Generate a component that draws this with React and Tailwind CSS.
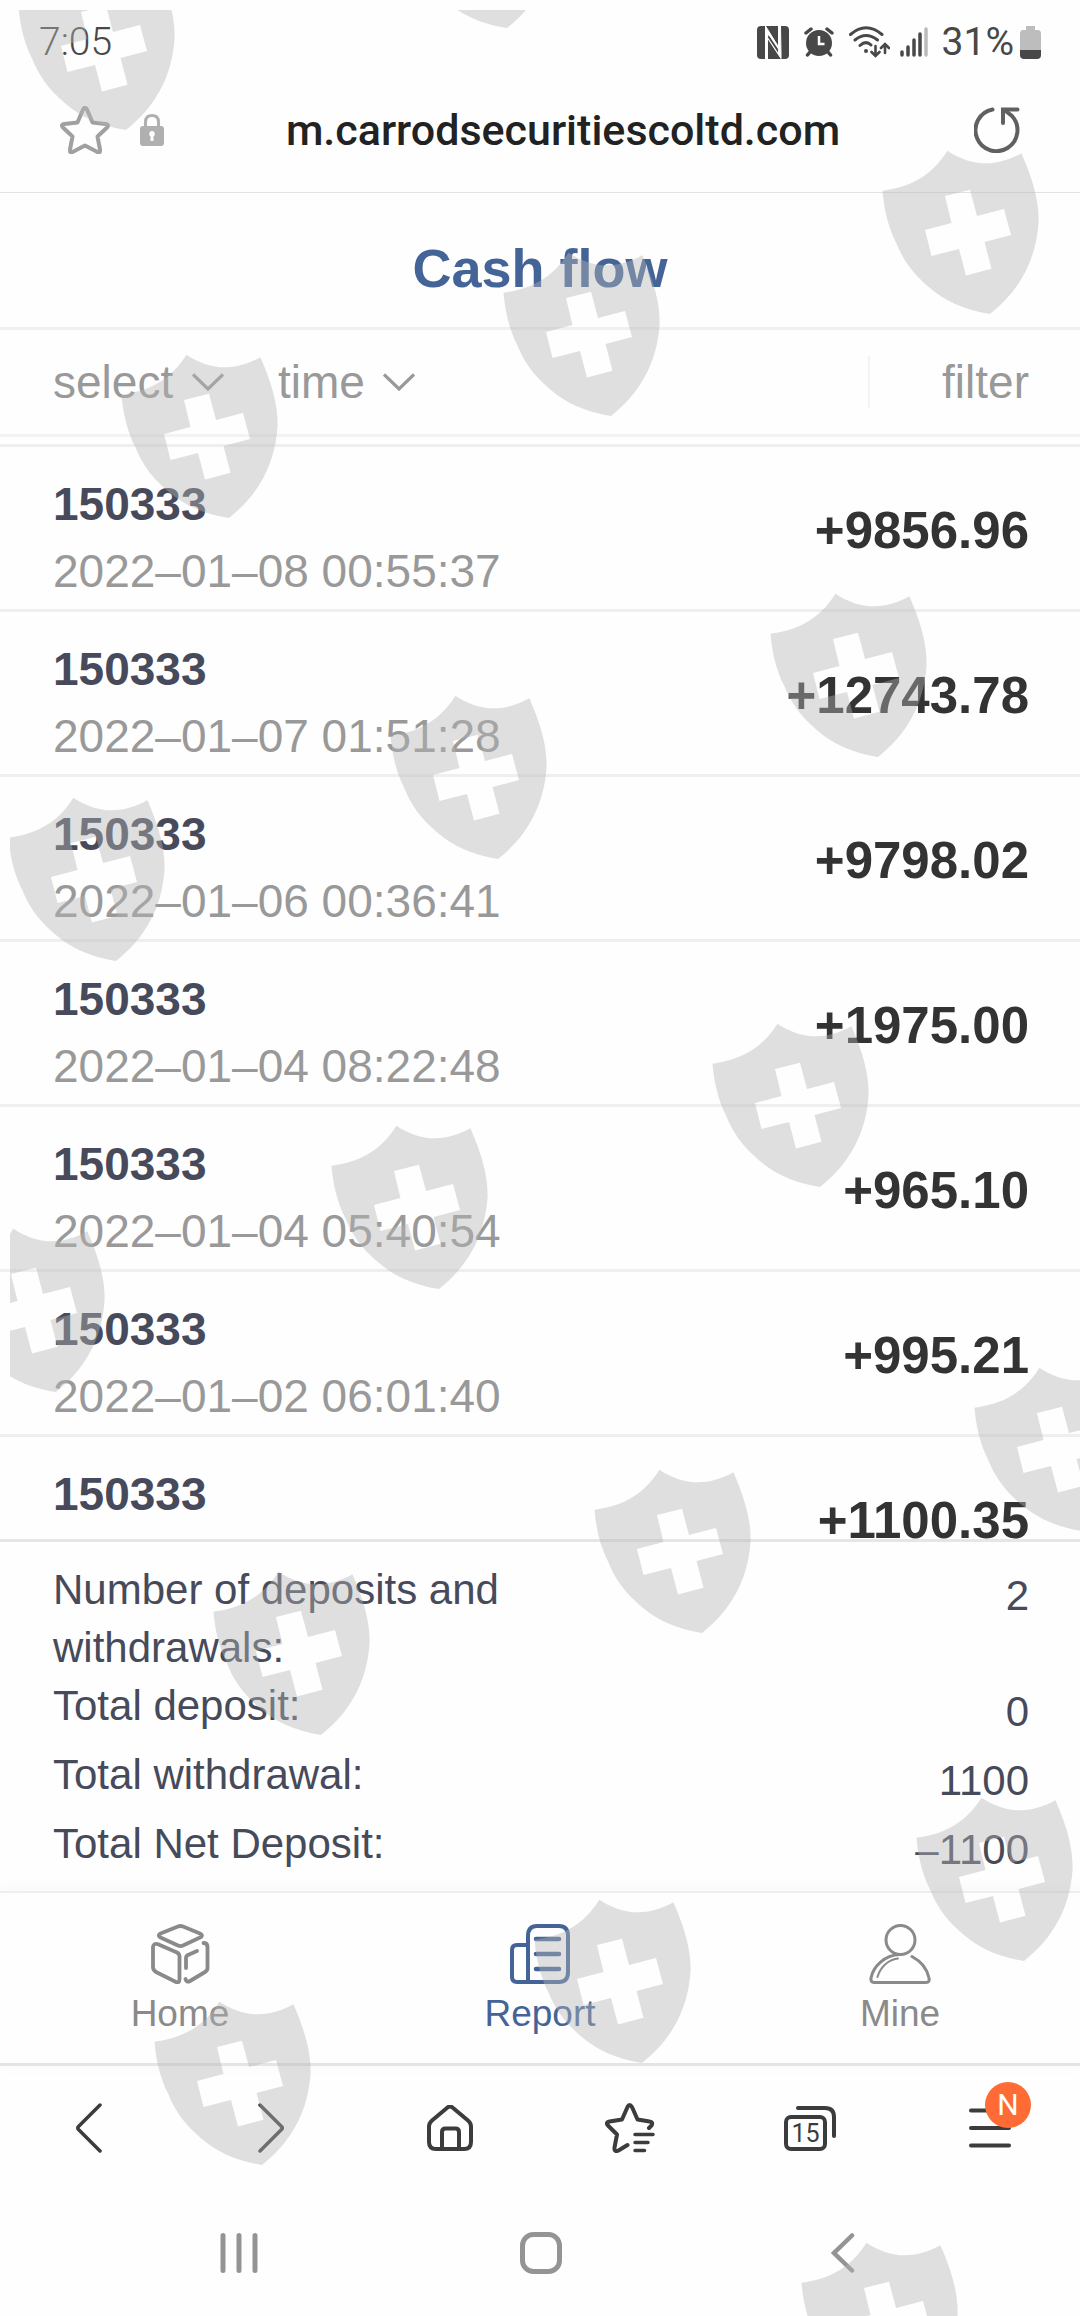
import React, { useState } from 'react';

const FLOWS = [
  { account: '150333', date: '2022–01–08 00:55:37', amount: '+9856.96' },
  { account: '150333', date: '2022–01–07 01:51:28', amount: '+12743.78' },
  { account: '150333', date: '2022–01–06 00:36:41', amount: '+9798.02' },
  { account: '150333', date: '2022–01–04 08:22:48', amount: '+1975.00' },
  { account: '150333', date: '2022–01–04 05:40:54', amount: '+965.10' },
  { account: '150333', date: '2022–01–02 06:01:40', amount: '+995.21' },
  { account: '150333', date: '', amount: '+1100.35' },
];

const SUMMARY = [
  { label: 'Number of deposits and withdrawals:', value: '2' },
  { label: 'Total deposit:', value: '0' },
  { label: 'Total withdrawal:', value: '1100' },
  { label: 'Total Net Deposit:', value: '–1100' },
];

const TABS = [
  { name: 'Home', Icon: CubeIcon },
  { name: 'Report', Icon: ReportIcon },
  { name: 'Mine', Icon: PersonIcon },
];

// top left corner of every shield on the watermark layer
const SHIELDS = [
  [8, -44],
  [389, -146],
  [872, 140],
  [493, 242],
  [111, 344],
  [760, 583],
  [380, 685],
  [-2, 787],
  [702, 1013],
  [321, 1115],
  [-62, 1218],
  [964, 1357],
  [584, 1459],
  [203, 1561],
  [906, 1787],
  [524, 1889],
  [144, 1991],
  [791, 2232],
];

function Watermark() {
  return (
    <svg
      className="absolute top-2.5 left-2.5 right-0 bottom-0 w-full h-full overflow-hidden pointer-events-none"
      aria-hidden="true"
    >
      <g fill="#b4b4b4" fillOpacity="0.42" fillRule="evenodd">
        {SHIELDS.map(([x, y]) => (
          <path
            key={`${x}-${y}`}
            transform={`translate(${x} ${y})`}
            d="M0.5 40.7C27 37 49 27 65.4 0.7C89 16 112 18 139.4 3.3C152 32 157 53 156.6 72C154 112 136 142 108 164C82 160 63 151 47 137.3C30 123 20 108 14.4 93.3C6 77 2 59 0.5 40.7ZM63 46L69.5 73L43 80L49.5 106L77 99L84 125.5L109.5 118.7L102.5 92L129 85L122 59L95 66L88 39.7Z"
          />
        ))}
      </g>
    </svg>
  );
}

function CubeIcon() {
  return (
    <svg width="60" height="60" viewBox="0 0 60 60" fill="none" stroke="currentColor" strokeWidth="3.800" strokeLinecap="round" strokeLinejoin="round">
      <path d="M28 2.500Q30.500 1.500 33 2.500L50 9.500Q54 11.500 50 13.500L33 21.500Q30.500 22.700 28 21.500L10.500 13.500Q7 11.500 10.500 9.500Z" />
      <path d="M7.500 20L27 28.500Q29.500 30 29.500 32.500V55Q29.500 59.500 26 58L6 48Q3 46 3 43V23Q3.500 19 7.500 20Z" />
      <path d="M53.500 19Q57.500 19 57.500 23V44Q57.500 46.500 55 48L40 57Q36.500 59 35.500 55" />
      <path d="M36 44V34Q36 32 38 31L47 27" />
    </svg>
  );
}

function ReportIcon() {
  return (
    <svg width="60" height="60" viewBox="0 0 60 60" fill="none" stroke="currentColor" strokeWidth="4" strokeLinecap="round" strokeLinejoin="round">
      <path d="M18 58V12Q18 2 27 2H49Q58 2 58 12V48Q58 58 49 58H7Q2 58 2 53V26Q2 21 7 21H18" />
      <path d="M26 15H49M26 30H49M26 45H49" strokeWidth="4.500" />
    </svg>
  );
}

function PersonIcon() {
  return (
    <svg width="62" height="60" viewBox="0 0 62 60" fill="none" stroke="currentColor" strokeLinecap="round" strokeLinejoin="round">
      <circle cx="31.500" cy="16" r="14.500" strokeWidth="3" />
      <path d="M31 30.500C15 31 4 43 2 54Q1.500 58.500 5 58.500H57Q61 58.500 60 54Q57 40 43 32.500" strokeWidth="3" />
      <path d="M8.500 53C11 44 18 36 29 34.500" strokeWidth="2" />
    </svg>
  );
}

function StatusIcons() {
  return (
    <>
      <svg className="mr-[15px]" width="32" height="33" viewBox="0 0 32 33">
        <rect width="32" height="33" rx="4" fill="#484848" />
        <path d="M8.500 0V33L10.500 33V12L24 32.500V28L23.500 0H21.500V21L8.500 0Z" fill="#fefefe" stroke="#fefefe" strokeWidth="1" />
        <path d="M11 11.500L21 26.500V23L11.500 9Z" fill="#484848" />
      </svg>
      <svg className="mr-[15px]" width="30" height="30" viewBox="0 0 30 30" fill="none" stroke="#484848" strokeLinecap="round">
        <circle cx="15" cy="16" r="13" fill="#484848" stroke="none" />
        <path d="M2 6L7 2M28 6L23 2M6 25L3.500 28M24 25L26.500 28" strokeWidth="3.500" />
        <path d="M15 9V17H20.500" stroke="#fefefe" strokeWidth="2.500" strokeLinecap="butt" />
      </svg>
      <svg className="mr-2.5" width="41" height="32" viewBox="0 0 41 32" fill="none" stroke="#484848" strokeWidth="3" strokeLinecap="round">
        <path d="M1.500 8.500Q17 -5 33 8.500M6 14Q17 5 28.500 14M11 19.500Q17 14 22 19" />
        <circle cx="17" cy="25" r="2" fill="#484848" stroke="none" />
        <path d="M26.500 20V29.500M22.500 26L26.500 30L30.500 26M36 27V18.500M32 22L36 18L40 22" strokeWidth="2.600" />
      </svg>
      <svg className="mr-3.5" width="28" height="30" viewBox="0 0 28 30" strokeWidth="3.500" strokeLinecap="round" stroke="#484848">
        <path d="M2 25V28M8 20V28M14 13V28M20 7V28" />
        <path d="M26 2V28" stroke="#bbb" />
      </svg>
    </>
  );
}

function Chevron() {
  return (
    <svg width="32" height="18" viewBox="0 0 32 18" fill="none" stroke="#999" strokeWidth="3.200">
      <path d="M1 1.500L16 16L31 1.500" />
    </svg>
  );
}

export default function App() {
  const [tab, setTab] = useState('Report');

  return (
    <div className="relative flex flex-col h-screen overflow-hidden bg-[#fefefe] font-['Liberation_Sans',Arial,sans-serif]">
      <div className="flex items-center pt-3 pl-[39px] pr-[39px] leading-[60px] text-[39px] text-[#484848] font-['Roboto',sans-serif]">
        <span className="mr-auto font-light">7:05</span>
        <StatusIcons />
        <span className="mr-1.5">31%</span>
        <svg width="21" height="33" viewBox="0 0 21 33">
          <path d="M6 0H15V4H18Q21 4 21 8V24H0V8Q0 4 3 4H6Z" fill="#bdbdbd" />
          <path d="M0 24H21V29Q21 33 17 33H4Q0 33 0 29Z" fill="#484848" />
        </svg>
      </div>

      <div className="flex items-center h-[121px] pb-1 px-[60px] border-b border-[#e2e2e2]">
        <button aria-label="Bookmark">
          <svg width="50" height="48" viewBox="0 0 50 48" fill="none" stroke="#a0a0a0" strokeWidth="4" strokeLinejoin="round">
            <path d="M23 3.500Q25 0 27 3.500L32.500 16.500L45.500 18Q50 18.500 46.500 22L37.500 30.500L40 43.500Q40.500 48 36.500 45.500L25 39.500L13.500 45.500Q9.500 48 10 43.500L12.500 30.500L3.500 22Q0 18.500 4.500 18L17.500 16.500Z" />
          </svg>
        </button>
        <svg className="ml-[30px]" width="24" height="32" viewBox="0 0 24 32">
          <path d="M5.500 14V8Q5.500 1.500 12 1.500T18.500 8V14" fill="none" stroke="#b0b0b0" strokeWidth="3" />
          <rect y="12" width="24" height="20" rx="3" fill="#b0b0b0" />
          <path d="M12 17A3 3 0 0 1 13.500 22.500V27H10.500V22.500A3 3 0 0 1 12 17Z" fill="#fefefe" />
        </svg>
        <input
          aria-label="Address"
          defaultValue="m.carrodsecuritiescoltd.com"
          className="flex-1 min-w-0 mr-3 bg-transparent text-center text-[43px] font-medium text-[#222] font-['Roboto',sans-serif] focus:outline-none"
        />
        <button aria-label="Reload">
          <svg width="46" height="46" viewBox="0 0 46 46" fill="none" stroke="#606060" strokeWidth="4" strokeLinecap="round">
            <path d="M18.500 2.500A21 21 0 1 0 38 9L31 3.500" />
            <path d="M43.500 2.500H29V16" />
          </svg>
        </button>
      </div>

      <h1 className="pt-11 pb-7 border-b-3 border-[#f0f0f0] text-center text-[54px] leading-[62px] font-bold text-[#446498]">
        Cash flow
      </h1>

      <div className="flex items-center h-[107px] pl-[53px] pr-[51px] border-b-3 border-[#f3f3f3] text-[46px] text-[#999]">
        <label className="flex items-center gap-[18px] mr-[54px]">
          <select aria-label="select" className="appearance-none bg-transparent">
            <option>select</option>
          </select>
          <Chevron />
        </label>
        <label className="flex items-center gap-[18px]">
          <select aria-label="time" className="appearance-none bg-transparent">
            <option>time</option>
          </select>
          <Chevron />
        </label>
        <button className="ml-auto pl-[72px] border-l-2 border-[#f3f3f3] leading-[52px]">filter</button>
      </div>

      <ul className="flex-1 min-h-0 mt-[7px] border-t-3 border-[#efefef] overflow-hidden">
        {FLOWS.map((flow, index) => (
          <li
            key={index}
            className="flex items-center justify-between pl-[53px] pr-[51px] pt-[27px] pb-2 border-b-3 border-[#efefef] text-[46px]"
          >
            <div>
              <p className="mb-[7px] leading-[60px] font-bold text-[#464a5a]">{flow.account}</p>
              <p className="h-[60px] leading-[60px] text-[#999]">{flow.date}</p>
            </div>
            <span className="mb-3 text-[51px] font-bold text-[#333]">{flow.amount}</span>
          </li>
        ))}
      </ul>

      <dl className="pl-[53px] pr-[51px] pt-[19px] pb-[7px] border-t-3 border-[#e6e6e6] text-[42px] text-[#464a5a]">
        {SUMMARY.map((row) => (
          <div key={row.label} className="flex items-start justify-between">
            <dt className="w-1/2 leading-[58px]">{row.label}</dt>
            <dd className="leading-[69px]">{row.value}</dd>
          </div>
        ))}
      </dl>

      <nav className="grid grid-cols-3 pt-[31px] pb-[27px] border-t-2 border-[#eee] shadow-[0_0_18px_rgba(0,0,0,0.04)]">
        {TABS.map(({ name, Icon }) => (
          <button
            key={name}
            onClick={() => setTab(name)}
            className={`flex flex-col items-center gap-2 text-[37px] leading-[44px] ${
              tab === name ? 'text-[#446498]' : 'text-[#8a8a8a]'
            }`}
          >
            <Icon />
            {name}
          </button>
        ))}
      </nav>

      <div className="grid grid-cols-6 h-[126px] border-t-3 border-[#e4e4e4] text-[#3c3c3c]">
        <button aria-label="Back" className="flex items-center justify-center">
          <svg width="28" height="50" viewBox="0 0 28 50" fill="none" stroke="currentColor" strokeWidth="3.500" strokeLinecap="round">
            <path d="M24 2L2.500 23.500Q1 25 2.500 26.500L24 48" />
          </svg>
        </button>
        <button aria-label="Forward" className="flex items-center justify-center">
          <svg width="28" height="50" viewBox="0 0 28 50" fill="none" stroke="currentColor" strokeWidth="3.500" strokeLinecap="round">
            <path d="M4 2L25.500 23.500Q27 25 25.500 26.500L4 48" />
          </svg>
        </button>
        <button aria-label="Start page" className="flex items-center justify-center">
          <svg width="46" height="46" viewBox="0 0 46 46" fill="none" stroke="currentColor" strokeWidth="4" strokeLinejoin="round">
            <path d="M20.500 2.500Q23 0.500 25.500 2.500L41 15.500Q44 18 44 21.500V37Q44 44 37 44H9Q2 44 2 37V21.500Q2 18 5 15.500Z" />
            <path d="M15 44V27Q15 23.500 18.500 23.500H28.500Q32 23.500 32 27V44" />
          </svg>
        </button>
        <button aria-label="Bookmarks" className="flex items-center justify-center">
          <svg width="50" height="50" viewBox="0 0 50 50" fill="none" stroke="currentColor" strokeWidth="4" strokeLinecap="round" strokeLinejoin="round">
            <path d="M44 25L46.500 22.500Q48.500 19 44.500 18.500L32.500 16.500L27 4Q24.500 0 22.500 4L17 16.500L4.500 18.500Q0 19.500 3 22.500L12 31.500L9.500 44.500Q9 49.500 13.500 47.500L22.500 42" />
            <path d="M30 31.500H48M30 39.500H43M30 47.500H39.500" strokeWidth="3.500" />
          </svg>
        </button>
        <button aria-label="Tabs" className="flex items-center justify-center">
          <svg width="52" height="46" viewBox="0 0 52 46" fill="none" stroke="currentColor" strokeWidth="4" strokeLinecap="round">
            <rect x="2" y="12" width="39" height="32" rx="5" />
            <path d="M14 3H41Q50 3 50 12V31" />
            <text x="21.500" y="37" textAnchor="middle" fill="currentColor" stroke="none" className="text-[25px] font-['Roboto',sans-serif]">15</text>
          </svg>
        </button>
        <button aria-label="Menu" className="flex items-center justify-center">
          <span className="relative">
            <svg width="42" height="40" viewBox="0 0 42 40" stroke="currentColor" strokeWidth="4" strokeLinecap="round">
              <path d="M2 2.500H40M2 20H40M2 37.500H40" />
            </svg>
            <span className="absolute -top-[26px] left-4 w-[46px] h-[46px] rounded-full bg-[#ff6b35] text-white text-[30px] leading-[46px] text-center font-['Roboto',sans-serif]">
              N
            </span>
          </span>
        </button>
      </div>

      <div className="grid grid-cols-3 h-[127px] pl-[88px] pr-[86px] text-[#949494]">
        <button aria-label="Recent apps" className="flex items-center justify-center">
          <svg width="38" height="40" viewBox="0 0 38 40" stroke="currentColor" strokeWidth="5" strokeLinecap="round">
            <path d="M3 2.500V37.500M19 2.500V37.500M35 2.500V37.500" />
          </svg>
        </button>
        <button aria-label="Home screen" className="flex items-center justify-center">
          <svg width="42" height="42" viewBox="0 0 42 42" fill="none" stroke="currentColor" strokeWidth="5">
            <rect x="2.500" y="2.500" width="37" height="37" rx="11" />
          </svg>
        </button>
        <button aria-label="Go back" className="flex items-center justify-center">
          <svg width="24" height="40" viewBox="0 0 24 40" fill="none" stroke="currentColor" strokeWidth="4.500" strokeLinecap="round">
            <path d="M21 2.500L3 20L21 37.500" />
          </svg>
        </button>
      </div>

      <Watermark />
    </div>
  );
}
